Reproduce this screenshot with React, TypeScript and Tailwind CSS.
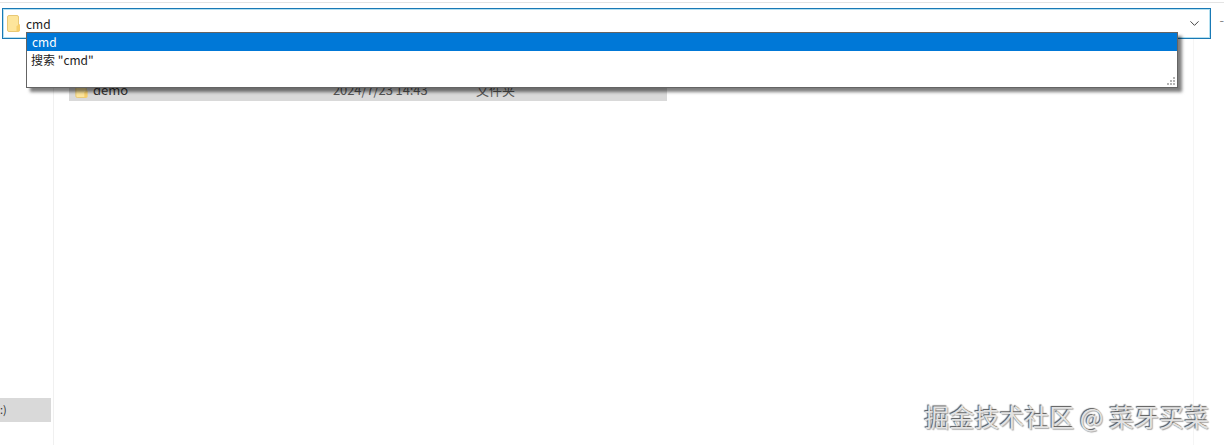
import { ChevronDown } from "lucide-react";

const font = { fontFamily: '"Noto Sans CJK SC", sans-serif' };

function FolderIcon({ className }: { className: string }) {
  return (
    <svg viewBox="0 0 13 17" className={className}>
      <path d="M0.5 2 Q0.5 0.5 2 0.5 H10 Q11.5 0.5 11.5 2 V16.5 H2 Q0.5 16.5 0.5 15 Z" fill="#fde59b" stroke="#e8c875" strokeWidth="1" />
      <path d="M9.5 16.5 V11 L13 9 V15.5 Q13 16.5 12 16.5 Z" fill="#f6cf6c" />
    </svg>
  );
}

export default function App() {
  return (
    <div className="relative h-[445px] w-[1224px] overflow-hidden bg-white font-['Noto_Sans_CJK_SC',sans-serif] text-black">
      <div className="h-[3px] border-b border-[#e4e4e4]" />
      <div className="flex h-[36px] items-start pt-[5px]">
        <div className="ml-[2px] flex h-[31px] w-[1210px] items-center border border-[#1979b5] pl-[4px] pr-[8px] shadow-[inset_0_0_0_1px_#b5e0f0]">
          <FolderIcon className="h-[17px] w-[13px]" />
          <span className="ml-[6px] text-[12px] leading-none text-[#222]">cmd</span>
          <ChevronDown className="ml-auto h-[15px] w-[15px] text-[#444]" strokeWidth={1.6} />
        </div>
        <span className="ml-[8px] mt-[5px] text-[13px] leading-none text-[#888]">-</span>
      </div>

      <div className="flex h-[406px]">
        <div className="flex w-[54px] flex-col justify-end border-r border-[#f0f0f0] pb-[23px]">
          <div className="flex h-[24px] w-[51px] items-center bg-[#d9d9d9] pb-[1px] text-[11px] leading-none text-[#333]">:)</div>
        </div>
        <div className="w-[1140px] border-r border-[#f5f5f5] pl-[15px] pt-[41px]">
          <div className="flex h-[21px] w-[598px] items-center bg-[#d9d9d9] pb-[2px] pl-[6px] text-[13px] leading-none text-[#555]">
            <FolderIcon className="h-[16px] w-[13px]" />
            <span className="ml-[5px] w-[240px] text-[#333]">demo</span>
            <span className="w-[143px] tracking-[-0.1px]">2024/7/23 14:43</span>
            <span>文件夹</span>
          </div>
        </div>
      </div>

      {/* autocomplete popup */}
      <div className="absolute left-[26px] top-[32px] h-[56px] w-[1152px] border border-[#646464] bg-white shadow-[4px_4px_3px_rgba(0,0,0,0.5)]">
        <div className="flex h-[18px] items-center bg-[#0078d7] pl-[5px] text-[12px] leading-none text-white">cmd</div>
        <div className="flex h-[18px] items-center pl-[4px] text-[12px] leading-none text-[#222]">搜索 "cmd"</div>
        <svg viewBox="0 0 9 9" className="absolute bottom-[1px] right-[1px] h-[9px] w-[9px]" fill="#b5b5b5">
          <rect x="6" y="0" width="2" height="2" />
          <rect x="3" y="3" width="2" height="2" />
          <rect x="6" y="3" width="2" height="2" />
          <rect x="0" y="6" width="2" height="2" />
          <rect x="3" y="6" width="2" height="2" />
          <rect x="6" y="6" width="2" height="2" />
        </svg>
      </div>

      {/* watermark */}
      <div
        className="absolute bottom-[16px] right-[15px] text-[25px] leading-none text-[#e2e2e2] [text-shadow:-1px_-1px_1px_#555,1px_1px_1px_#aaa]"
        style={font}
      >
        掘金技术社区 @ 菜牙买菜
      </div>
    </div>
  );
}
